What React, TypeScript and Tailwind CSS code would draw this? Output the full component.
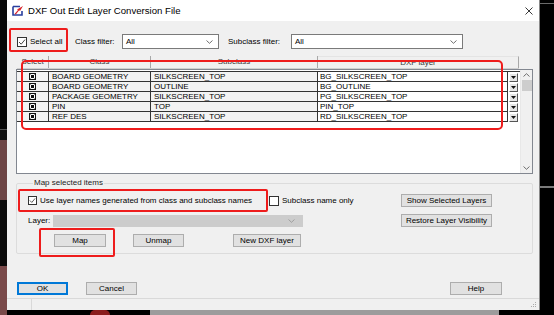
import React from "react";

const rows = [
  ["BOARD GEOMETRY", "SILKSCREEN_TOP", "BG_SILKSCREEN_TOP"],
  ["BOARD GEOMETRY", "OUTLINE", "BG_OUTLINE"],
  ["PACKAGE GEOMETRY", "SILKSCREEN_TOP", "PG_SILKSCREEN_TOP"],
  ["PIN", "TOP", "PIN_TOP"],
  ["REF DES", "SILKSCREEN_TOP", "RD_SILKSCREEN_TOP"],
];

function Chevron({ color = "#606060" }: { color?: string }) {
  return (
    <svg width="7" height="4" viewBox="0 0 7 4">
      <path d="M0.5 0.5 L3.5 3.3 L6.5 0.5" fill="none" stroke={color} strokeWidth="0.9" />
    </svg>
  );
}

function Check({ checked, size = 10 }: { checked: boolean; size?: number }) {
  return (
    <div
      className="flex items-center justify-center bg-white border border-[#333333] shrink-0"
      style={{ width: size, height: size }}
    >
      {checked && (
        <svg width={size - 2} height={size - 2} viewBox="0 0 8 8">
          <path d="M1 4 L3.2 6.2 L7 1.6" fill="none" stroke="#333333" strokeWidth="0.9" />
        </svg>
      )}
    </div>
  );
}

function Btn({ children, w, primary }: { children: React.ReactNode; w: number; primary?: boolean }) {
  return (
    <div
      className={
        "h-[13px] flex items-center justify-center bg-[#e1e1e1] border leading-none " +
        (primary ? "border-[#0078d7] shadow-[inset_0_0_0_1px_#0078d7]" : "border-[#adadad]")
      }
      style={{ width: w }}
    >
      {children}
    </div>
  );
}

function BoxX() {
  return (
    <svg width="7" height="7" viewBox="0 0 7 7">
      <rect x="0.5" y="0.5" width="6" height="6" fill="white" stroke="#111" strokeWidth="1" />
      <rect x="2" y="2" width="3" height="3" fill="#111" />
      <path d="M1.5 1.5 L5.5 5.5 M5.5 1.5 L1.5 5.5" stroke="#111" strokeWidth="0.8" />
    </svg>
  );
}

function DropBtn() {
  return (
    <div className="w-[9px] h-[9px] bg-[#e6e6e6] border-t border-l border-t-white border-l-white border-b border-r border-b-[#555] border-r-[#555] flex items-center justify-center">
      <svg width="5" height="3" viewBox="0 0 5 3">
        <path d="M0 0 L5 0 L2.5 3 Z" fill="#111" />
      </svg>
    </div>
  );
}

export default function App() {
  return (
    <div className="relative w-[554px] h-[315px] bg-black overflow-hidden flex font-['Liberation_Sans',Arial,sans-serif] text-[8px] text-black leading-none">
      {/* left backdrop strip */}
      <div className="w-[7px] h-full flex flex-col shrink-0">
        <div className="h-[129px] bg-[#080808]" />
        <div className="h-[1px] bg-[#555]" />
        <div className="h-[10px] bg-[#111]" />
        <div className="h-[60px] bg-[#6c4444]" />
        <div className="h-[66px] bg-[#0a0a0a]" />
        <div className="flex-1 bg-[#7a4a4a]" />
      </div>

      {/* dialog column */}
      <div className="w-[533px] flex flex-col shrink-0">
        <div className="h-[310px] bg-[#f0f0f0] flex flex-col border-r border-[#8a8a8a]">
          {/* title bar */}
          <div className="h-[21px] bg-white flex items-center shrink-0">
            <div className="ml-[5px] w-[12px] h-[11px]">
              <svg width="12" height="11" viewBox="0 0 12 11">
                <path d="M1 1.5 H8 M1 1.5 V10 H10 V6" fill="none" stroke="#2a3f9e" strokeWidth="1.6" />
                <path d="M2.5 9 L6 5 L5 4.5 L11 1 L8 6 L7.2 5.3 L3.8 9.6 Z" fill="#d8232a" />
              </svg>
            </div>
            <span className="ml-[4px] text-[9.6px] text-black">DXF Out Edit Layer Conversion File</span>
            <div className="flex-1" />
            <svg className="mr-[6px]" width="8" height="8" viewBox="0 0 8 8">
              <path d="M0.5 0.5 L7.5 7.5 M7.5 0.5 L0.5 7.5" stroke="#222" strokeWidth="0.9" />
            </svg>
          </div>

          {/* filter row */}
          <div className="mt-[13px] h-[15px] flex items-center pl-[10px]">
            <div className="w-[58px] flex items-center">
              <Check checked size={10} />
              <span className="ml-[3px]">Select all</span>
            </div>
            <div className="w-[47px]">Class filter:</div>
            <div className="w-[97px] h-[15px] bg-white border border-[#7a7a7a] flex items-center pl-[3px] pr-[5px]">
              <span className="flex-1">All</span>
              <Chevron />
            </div>
            <div className="ml-[9px] w-[63px]">Subclass filter:</div>
            <div className="w-[172px] h-[15px] bg-white border border-[#7a7a7a] flex items-center pl-[3px] pr-[5px]">
              <span className="flex-1">All</span>
              <Chevron />
            </div>
          </div>

          {/* grid header */}
          <div className="mt-[7px] ml-[10px] w-[502px] h-[13px] flex text-[#3a3a3a] text-[8px] border-b border-[#cfcfcf]">
            <div className="w-[32px] flex items-center justify-center border-r border-[#a8a8a8]">Select</div>
            <div className="w-[102px] flex items-center justify-center border-r border-[#a8a8a8]">Class</div>
            <div className="w-[167px] flex items-center justify-center border-r border-[#a8a8a8]">Subclass</div>
            <div className="w-[201px] flex items-center justify-center border-r border-[#a8a8a8] border-t border-t-[#e4e4e4]">DXF layer</div>
          </div>

          {/* grid frame */}
          <div className="ml-[9px] w-[517px] h-[105px] border border-[#828790] bg-white flex">
            <div className="flex-1 pt-[1px]">
              <div className="border-t border-[#333]">
                {rows.map((r, i) => (
                  <div key={i} className="h-[10px] flex text-[8px]">
                    <div className="w-[32px] flex items-center justify-center bg-[#f3f3f3] border-r border-b border-[#333]">
                      <BoxX />
                    </div>
                    <div className="w-[102px] flex items-center pl-[3px] bg-[#f3f3f3] border-r border-b border-[#333]">{r[0]}</div>
                    <div className="w-[167px] flex items-center pl-[3px] bg-[#f3f3f3] border-r border-b border-[#333]">{r[1]}</div>
                    <div className="w-[190px] flex items-center pl-[2px] bg-white border-r border-b border-[#333]">{r[2]}</div>
                    <div className="ml-[1px] flex items-center">
                      <DropBtn />
                    </div>
                  </div>
                ))}
              </div>
            </div>
            {/* scrollbar */}
            <div className="w-[12px] bg-[#f0f0f0] border-l border-[#e8e8e8] flex flex-col items-center">
              <div className="h-[10px] flex items-center justify-center">
                <svg width="7" height="4" viewBox="0 0 7 4">
                  <path d="M0.5 3.5 L3.5 0.7 L6.5 3.5" fill="none" stroke="#606060" strokeWidth="0.9" />
                </svg>
              </div>
              <div className="w-[10px] h-[11px] bg-[#cdcdcd]" />
              <div className="flex-1" />
              <div className="h-[10px] flex items-center justify-center">
                <Chevron />
              </div>
            </div>
          </div>

          {/* group box */}
          <fieldset className="mt-[5px] ml-[9px] w-[517px] h-[75px] border border-[#dcdcdc] rounded-[2px] pl-[11px] pr-[40px]">
            <legend className="ml-[5px] px-[1px] text-[#222]">Map selected items</legend>
            <div className="mt-[7px] h-[13px] flex items-center">
              <Check checked size={9} />
              <span className="ml-[3px] w-[229px]">Use layer names generated from class and subclass names</span>
              <Check checked={false} size={10} />
              <span className="ml-[3px]">Subclass name only</span>
              <div className="flex-1" />
              <Btn w={91}>Show Selected Layers</Btn>
            </div>
            <div className="mt-[7px] h-[13px] flex items-center">
              <span className="w-[25px]">Layer:</span>
              <div className="w-[250px] h-[12px] bg-[#cccccc] flex items-center justify-end pr-[8px]">
                <Chevron color="#9a9a9a" />
              </div>
              <div className="flex-1" />
              <Btn w={91}>Restore Layer Visibility</Btn>
            </div>
            <div className="mt-[7px] h-[13px] flex items-center">
              <div className="ml-[26px]" />
              <Btn w={52}>Map</Btn>
              <div className="ml-[27px]" />
              <Btn w={51}>Unmap</Btn>
              <div className="ml-[49px]" />
              <Btn w={68}>New DXF layer</Btn>
            </div>
          </fieldset>

          {/* bottom buttons */}
          <div className="mt-[28px] h-[13px] flex items-center pl-[10px] pr-[37px]">
            <Btn w={51} primary>OK</Btn>
            <div className="ml-[18px]" />
            <Btn w={51}>Cancel</Btn>
            <div className="flex-1" />
            <Btn w={52}>Help</Btn>
          </div>

          {/* status bar */}
          <div className="mt-[3px] flex-1 border-t border-[#d9d9d9] flex">
            <div className="w-[25px] border-r border-[#d9d9d9]" />
            <div className="flex-1" />
            <div className="w-[8px] flex items-end justify-end pb-[2px] pr-[2px]">
              <svg width="6" height="6" viewBox="0 0 6 6">
                <rect x="4" y="0" width="1" height="1" fill="#aaa" />
                <rect x="2" y="2" width="1" height="1" fill="#aaa" />
                <rect x="4" y="2" width="1" height="1" fill="#aaa" />
                <rect x="0" y="4" width="1" height="1" fill="#aaa" />
                <rect x="2" y="4" width="1" height="1" fill="#aaa" />
                <rect x="4" y="4" width="1" height="1" fill="#aaa" />
              </svg>
            </div>
          </div>
        </div>
        {/* below-dialog backdrop */}
        <div className="flex-1 flex">
          <div className="w-[83px] bg-black" />
          <div className="w-[20px] bg-[#8a1c1c] rounded-t-full" />
          <div className="w-[40px] bg-black" />
          <div className="w-[349px] bg-[#9c9c9c]" />
          <div className="flex-1 bg-black" />
        </div>
      </div>

      {/* right backdrop strip */}
      <div className="flex-1 flex flex-col">
        <div className="h-[3px]" />
        <div className="h-[1px] bg-[#6a6a6a]" />
        <div className="h-[182px]" />
        <div className="h-[2px] bg-[#7a7a7a]" />
        <div className="flex-1" />
      </div>

      {/* red annotation boxes */}
      <div className="absolute left-[9px] top-[28px] w-[59px] h-[24px] border-2 border-[#ee1c1c] rounded-[2px]" />
      <div className="absolute left-[21px] top-[60px] w-[482px] h-[70px] border-2 border-[#ee1c1c] rounded-[5px]" />
      <div className="absolute left-[18px] top-[189px] w-[250px] h-[23px] border-2 border-[#ee1c1c] rounded-[2px]" />
      <div className="absolute left-[39px] top-[228px] w-[76px] h-[29px] border-2 border-[#ee1c1c] rounded-[2px]" />
    </div>
  );
}
